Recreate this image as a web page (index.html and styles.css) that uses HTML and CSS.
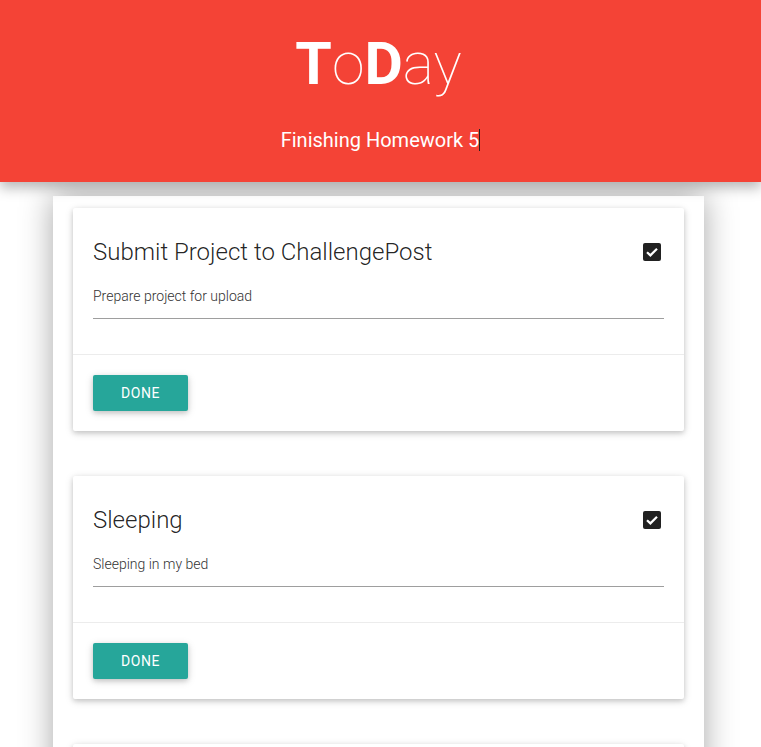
FILE: index.html
```html
<!DOCTYPE html>
<html>
<head>
<meta charset="utf-8">
<title>ToDay</title>
<link rel="stylesheet" href="styles.css">
</head>
<body>
<header class="header">
  <h1 class="logo"><b>T</b>o<b>D</b>ay</h1>
  <div class="task-input"><span class="task-text">Finishing Homework 5</span><span class="caret"></span></div>
</header>
<main class="container">
  <section class="card">
    <div class="card-content">
      <div class="card-head">
        <span class="card-title">Submit Project to ChallengePost</span>
        <span class="checkbox"><svg width="18" height="18" viewBox="0 0 18 18"><path d="M4 9.2 L7.4 12.4 L14 5.8" fill="none" stroke="#fff" stroke-width="2.2"/></svg></span>
      </div>
      <div class="card-desc">Prepare project for upload</div>
    </div>
    <div class="card-action"><button class="btn">DONE</button></div>
  </section>
  <section class="card">
    <div class="card-content">
      <div class="card-head">
        <span class="card-title">Sleeping</span>
        <span class="checkbox"><svg width="18" height="18" viewBox="0 0 18 18"><path d="M4 9.2 L7.4 12.4 L14 5.8" fill="none" stroke="#fff" stroke-width="2.2"/></svg></span>
      </div>
      <div class="card-desc">Sleeping in my bed</div>
    </div>
    <div class="card-action"><button class="btn">DONE</button></div>
  </section>
  <section class="card card-empty"></section>
</main>
</body>
</html>
```
FILE: styles.css
```css
html, body {
  margin: 0;
  padding: 0;
  background: #fff;
  font-family: Roboto, "Liberation Sans", sans-serif;
  overflow: hidden;
}
.header {
  position: relative;
  z-index: 2;
  height: 182px;
  background: #f44336;
  box-shadow: 0 6px 12px rgba(0,0,0,0.28);
  display: flex;
  flex-direction: column;
  align-items: center;
  color: #fff;
}
.logo {
  margin: 28px 4px 0 0;
  font-size: 59px;
  font-weight: 100;
  line-height: 72px;
  letter-spacing: 0;
}
.logo b {
  font-weight: 700;
}
.task-input {
  margin-top: 28px;
  display: flex;
  align-items: center;
  height: 24px;
}
.task-text {
  font-size: 20px;
  line-height: 24px;
}
.caret {
  width: 1px;
  height: 22px;
  background: #222;
  margin-left: 0;
}
.container {
  position: relative;
  z-index: 1;
  width: 611px;
  margin: 14px 0 0 53px;
  padding: 12px 20px 0;
  background: #fff;
  box-shadow: 0 0 30px rgba(0,0,0,0.35);
  display: flex;
  flex-direction: column;
  gap: 45px;
  min-height: 700px;
}
.card {
  background: #fff;
  border-radius: 2px;
  box-shadow: 0 2px 5px rgba(0,0,0,0.16), 0 2px 10px rgba(0,0,0,0.12);
}
.card-empty {
  height: 100px;
}
.card-content {
  padding: 28px 20px 35px;
}
.card-head {
  display: flex;
  justify-content: space-between;
  align-items: center;
}
.card-title {
  font-size: 24px;
  font-weight: 300;
  line-height: 32px;
  color: rgba(0,0,0,0.87);
}
.checkbox {
  width: 18px;
  height: 18px;
  background: #212121;
  border-radius: 2px;
  margin-right: 3px;
  margin-top: -1px;
  display: block;
}
.checkbox svg {
  display: block;
}
.card-desc {
  margin-top: 18px;
  font-size: 14px;
  font-weight: 300;
  line-height: 20px;
  color: #333;
  padding-bottom: 12px;
  border-bottom: 1px solid #9e9e9e;
}
.card-action {
  border-top: 1px solid rgba(160,160,160,0.2);
  padding: 20px;
}
.btn {
  display: block;
  width: 95px;
  height: 36px;
  border: none;
  border-radius: 2px;
  background: #26a69a;
  color: #fff;
  font-family: Roboto, "Liberation Sans", sans-serif;
  font-size: 14px;
  font-weight: 400;
  letter-spacing: 0.5px;
  box-shadow: 0 2px 5px rgba(0,0,0,0.16), 0 2px 10px rgba(0,0,0,0.12);
  padding: 0;
}
```
